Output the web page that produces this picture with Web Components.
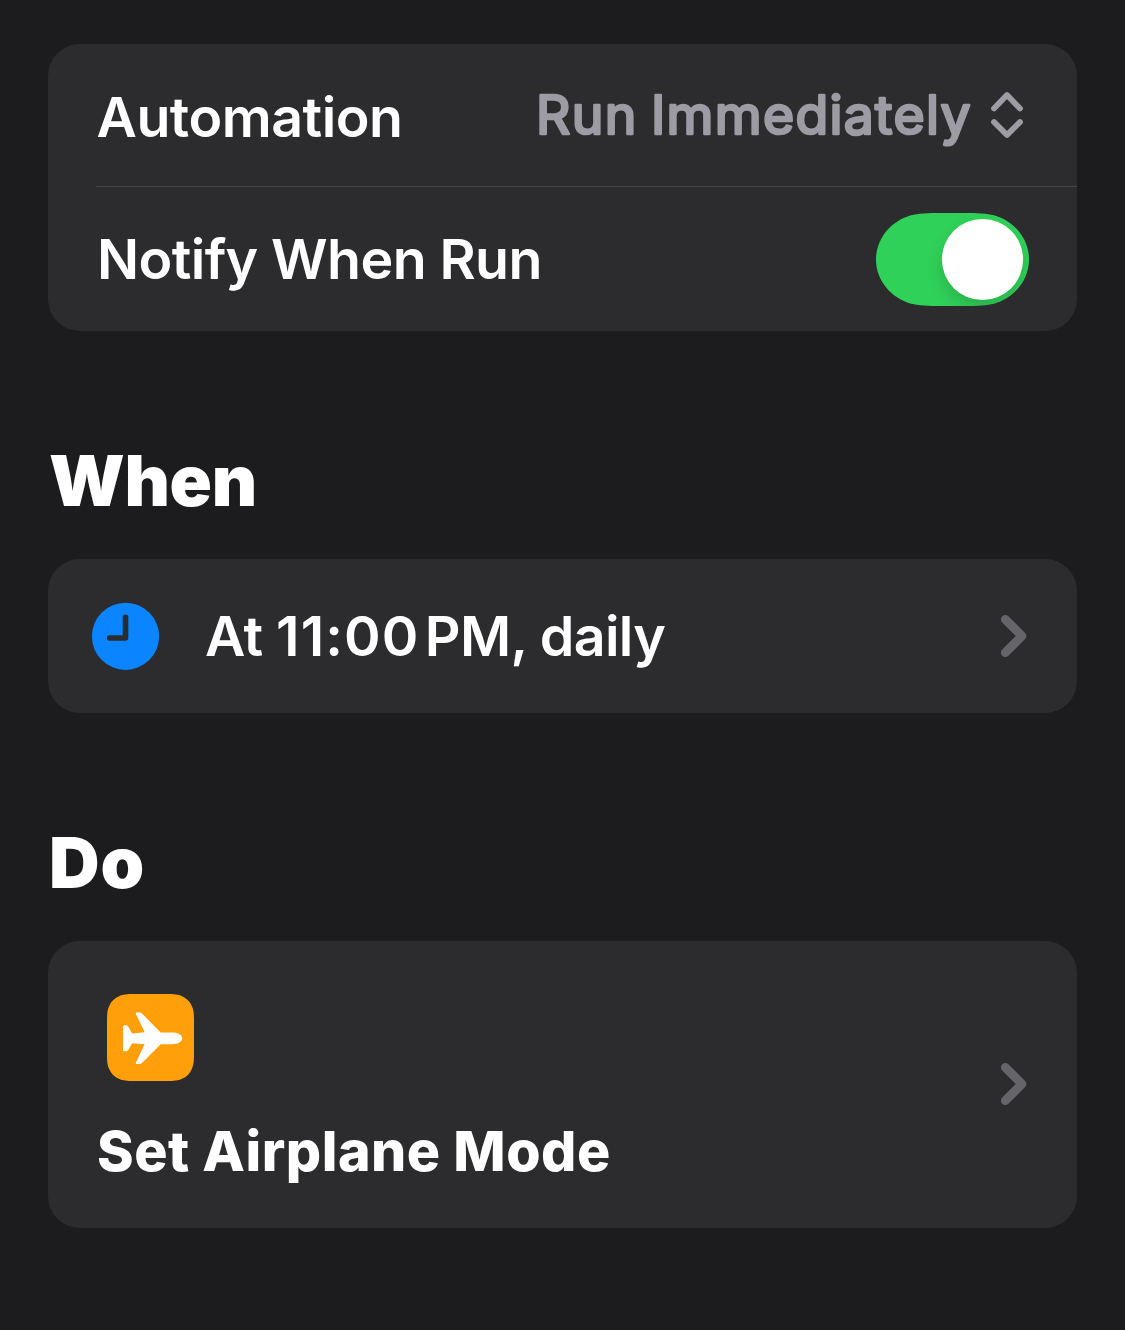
<!DOCTYPE html>
<html lang="en">
<head>
<meta charset="utf-8">
<title>Automation</title>
<style>
html,body{margin:0;background:#1c1c1e}
body{font-family:Inter,"Liberation Sans",sans-serif;color:#fff}
</style>
</head>
<body>
<automation-page></automation-page>
<script>
const define = (name, html) => {
  const t = document.createElement('template');
  t.innerHTML = html;
  customElements.define(name, class extends HTMLElement {
    constructor() {
      super();
      this.attachShadow({mode: 'open'}).append(t.content.cloneNode(true));
    }
  });
};

define('settings-card', `
<style>:host{display:flex;flex-direction:column;box-sizing:border-box;background:#2c2c2e;border-radius:32px;overflow:hidden}</style>
<slot></slot>`);

define('settings-row', `
<style>
:host{display:flex;align-items:center;justify-content:space-between;box-sizing:border-box;white-space:nowrap;font-size:55.5px;font-weight:600;line-height:68px}
</style>
<slot></slot><slot name="end"></slot>`);

define('row-divider', `<style>:host{display:block;height:1px;margin-left:48px;background:#444448}</style>`);

define('section-title', `
<style>:host{display:block;font-size:70px;font-weight:900;line-height:86px;white-space:nowrap}</style><slot></slot>`);

define('toggle-switch', `
<style>:host{display:block;width:153px;height:93px}svg{display:block}</style>
<svg width="153" height="93" viewBox="0 0 153 93">
<defs><filter id="s" x="-50%" y="-50%" width="200%" height="200%"><feGaussianBlur stdDeviation="9"/></filter>
<clipPath id="c"><path d="M68 0H85C102 0 111 .6 118 2.300C138 8 153 25.500 153 46.500S138 85 118 90.700C111 92.400 102 93 85 93H68C51 93 42 92.400 35 90.700C15 85 0 67.500 0 46.500S15 8 35 2.300C42 .6 51 0 68 0Z"/></clipPath></defs>
<g clip-path="url(#c)"><rect width="153" height="93" fill="#30d158"/><circle cx="106.500" cy="54" r="39" fill="#000" opacity=".18" filter="url(#s)"/></g>
<circle cx="106.500" cy="46.500" r="40.600" fill="#fff"/></svg>`);

define('value-picker', `
<style>:host{display:flex;align-items:center;gap:16px}svg{display:block;overflow:visible}
text{font:400 53.500px Inter,"Liberation Sans",sans-serif;word-spacing:-3px;fill:#9d9ca5;stroke:#9d9ca5;stroke-width:2.700;stroke-linejoin:round}</style>
<svg width="437" height="68"><text x="0" y="52.500" textLength="434" lengthAdjust="spacing">Run Immediately</text></svg>
<svg width="36" height="50" viewBox="0 0 36 50" fill="none" stroke="#9d9ca5" stroke-width="5.800" stroke-linecap="round" stroke-linejoin="round"><path d="M5 18.500L18 5L31 18.500M5 32L18 45L31 32"/></svg>`);

define('chevron-icon', `
<style>:host,svg{display:block}</style>
<svg width="28" height="44" viewBox="0 0 28 44" fill="none" stroke="#656569" stroke-width="8.800" stroke-linecap="round" stroke-linejoin="round"><path d="M5.300 5.300L22 22L5.300 38.700"/></svg>`);

define('clock-icon', `
<style>:host,svg{display:block}</style>
<svg width="68" height="68" viewBox="0 0 68 68"><circle cx="34.500" cy="34.300" r="33.600" fill="#0a84ff"/><path d="M34.500 15.200V36H18.700" fill="none" stroke="#2c2c2e" stroke-width="5.600" stroke-linecap="round" stroke-linejoin="round"/></svg>`);

define('airplane-icon', `
<style>:host,svg{display:block}</style>
<svg width="87" height="87" viewBox="0 0 87 87"><path fill="#ff9f0a" d="M27 0H60C67 0 71 .3 75 2.200C79.500 4 83 7.500 84.800 12C86.700 16 87 20 87 27V60C87 67 86.700 71 84.800 75C83 79.500 79.500 83 75 84.800C71 86.700 67 87 60 87H27C20 87 16 86.700 12 84.800C7.500 83 4 79.500 2.200 75C.3 71 0 67 0 60V27C0 20 .3 16 2.200 12C4 7.500 7.500 4 12 2.200C16 .3 20 0 27 0Z"/>
<path fill="#fff" d="M16 32.500Q16 31.300 17.200 31.300H19.300Q20.300 31.300 21 32.300L25.200 39.400L37.700 38.300L29 20.300Q28.200 18.500 30 18.500H32.300Q34 18.500 35 19.600L53.700 38.400H66C71 38.400 75.300 41 75.300 44.300S71 50.200 66 50.200H53.700L35 69Q34 70.100 32.300 70.100H30Q28.200 70.100 29 68.300L37.700 50.300L25.200 49.200L21 56.300Q20.300 57.300 19.300 57.300H17.200Q16 57.300 16 56.100Z"/></svg>`);

define('automation-page', `
<style>
:host{display:flex;flex-direction:column;box-sizing:border-box;width:1125px;height:1330px;padding:44px 48px 0;background:#1c1c1e}
.mode{height:142px;padding:0 52px 0 48.500px;letter-spacing:-.5px}
.mode>span{padding-top:4px}
.notify{height:144px;padding:0 48px 0 49px;letter-spacing:-.6px}
.when{margin-top:107px;padding-left:1px;letter-spacing:-.3px}
.do{margin-top:107px;padding-left:1px;letter-spacing:1px}
.s1{margin-top:35px;height:154px}
.s2{margin-top:35px;height:287px}
.time{height:154px;padding:0 49px 0 43px}
.what{display:flex;align-items:center;gap:46px}
.at{letter-spacing:-.5px}
.clock{letter-spacing:1.100px}
.gap{letter-spacing:-3.800px}
.rest{letter-spacing:-.65px}
.action{height:287px;padding:0 49px 0 49px}
.action chevron-icon{padding-bottom:1px}
.stack{display:flex;flex-direction:column;align-items:flex-start;gap:36px;padding-top:9px}
airplane-icon{margin-left:10px}
.stack b{font-weight:800;letter-spacing:.5px}
</style>
<settings-card>
<settings-row class="mode"><span>Automation</span><value-picker slot="end"></value-picker></settings-row>
<row-divider></row-divider>
<settings-row class="notify"><span>Notify When Run</span><toggle-switch slot="end"></toggle-switch></settings-row>
</settings-card>
<section-title class="when"><span>When</span></section-title>
<settings-card class="s1"><settings-row class="time"><div class="what"><clock-icon></clock-icon><span class="line"><span class="at">At </span><span class="clock">11:00</span><span class="gap">&#8239;</span><span class="rest">PM, daily</span></span></div><chevron-icon slot="end"></chevron-icon></settings-row></settings-card>
<section-title class="do"><span>Do</span></section-title>
<settings-card class="s2"><settings-row class="action"><div class="stack"><airplane-icon></airplane-icon><b>Set Airplane Mode</b></div><chevron-icon slot="end"></chevron-icon></settings-row></settings-card>`);
</script>
</body>
</html>
